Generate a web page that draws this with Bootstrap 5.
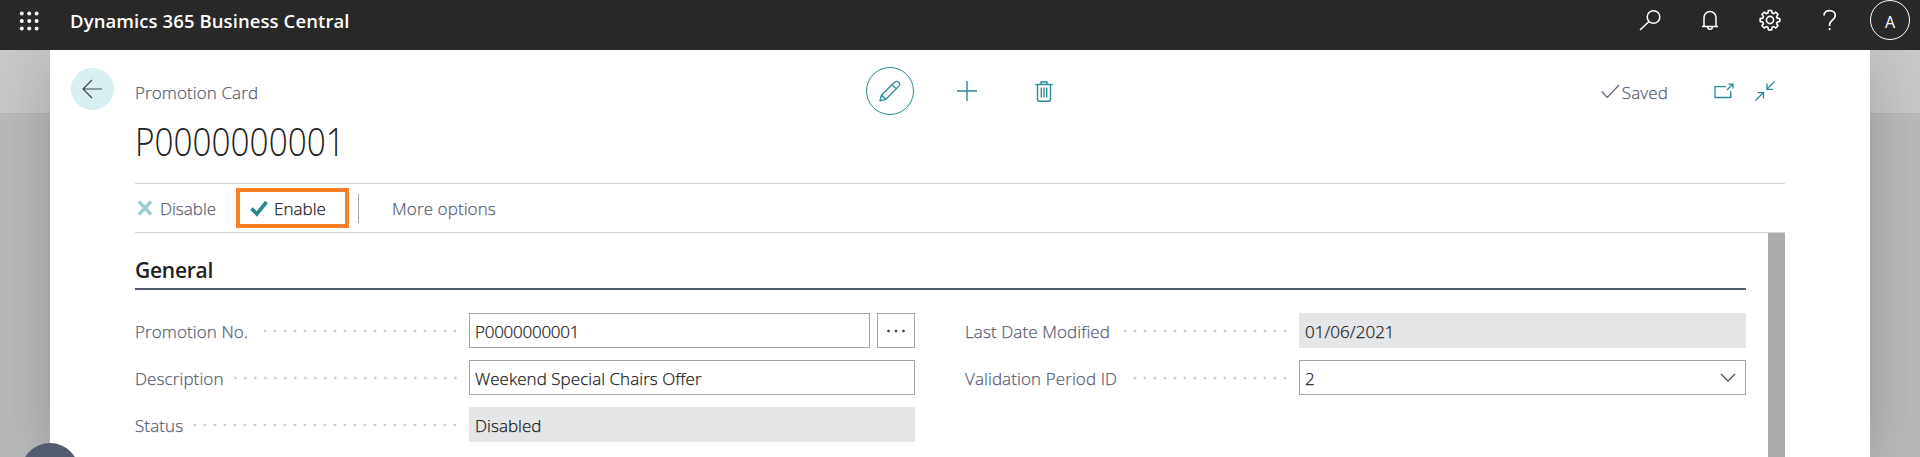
<!DOCTYPE html>
<html lang="en">
<head>
<meta charset="utf-8">
<title>Promotion Card</title>
<meta name="viewport" content="width=device-width, initial-scale=1">
<link href="https://cdn.jsdelivr.net/npm/bootstrap@5.3.0/dist/css/bootstrap.min.css" rel="stylesheet">
<style>
  html { overflow: hidden; }
  body { font-family: "Open Sans", "Noto Sans", sans-serif; font-size: 17px; font-weight: 300; line-height: 24px; height: 457px; overflow: hidden; color: #212121; background: #b9baba; }
  svg { display: block; flex: none; fill: none; }
  .topbar { height: 50px; background: #282828; color: #fff; padding: 0 10px 0 19px; }
  .brand { font-weight: 600; font-size: 18.5px; letter-spacing: .09px; margin-left: 31px; }
  .tools { gap: 38px; padding-bottom: 10px; }
  .avatar { width: 40px; height: 40px; border: 1px solid #fff; border-radius: 50%; font-size: 16px; font-weight: 400; padding-top: 3px; margin-left: -9px; }
  .stage-clip { position: relative; overflow: hidden; height: 407px; }
  .stage { padding: 0 50px; }
  .gutter-top { position: absolute; inset: 0 0 auto 0; height: 64px; background: #c9c9c9; border-bottom: 1px solid #b5b5b5; }
  .sheet { position: relative; height: 407px; background: #fff; box-shadow: 0 10px 60px rgba(0,0,0,.2); padding: 0 85px; -webkit-text-stroke: .25px currentColor; }
  .head { height: 133px; }
  .crumbs { height: 68px; padding-top: 16px; }
  .back { width: 43px; height: 42px; border-radius: 50%; background: #d9eff2; margin: 2px 21px 0 -64px; padding-right: 1px; }
  .crumb-item { margin-top: 15px; }
  .slate { color: #586174; }
  .doc-title { font-size: 38px; line-height: 46px; font-weight: 300; letter-spacing: 0; margin: 0; width: max-content; transform: scaleX(.877); transform-origin: 0 50%; -webkit-text-stroke: 0; }
  .center-tools { position: absolute; left: 816px; top: 17px; height: 48px; }
  .pen { width: 48px; height: 48px; border: 1px solid #2b8a93; border-radius: 50%; }
  .actions { height: 50px; border-top: 1px solid #d2d4d9; border-bottom: 1px solid #d2d4d9; }
  .actions span span, .lab span, .box span, .crumb-item span { position: relative; top: 1px; }
  .hot { width: 113px; height: 40px; border: 4px solid #ff8126; padding-left: 10px; margin-left: 20px; }
  .sep { width: 1px; height: 29px; background: #a3a8b1; margin: 0 33px 0 9px; }
  .body-area { height: 224px; }
  .panel { width: 1611px; }
  .scroller { width: 17px; background: #ababab; }
  .sect { height: 57px; border-bottom: 2px solid #505c6d; font-size: 21px; font-weight: 600; letter-spacing: -.25px; padding-top: 26px; -webkit-text-stroke: 0; }
  .sect span { margin-top: -7px; }
  .cols { display: grid; grid-template-columns: 780px 781px; column-gap: 50px; padding-top: 23px; }
  .field { height: 35px; margin-bottom: 12px; }
  .lab { width: 334px; letter-spacing: .1px; }
  .dots { height: 4px; margin: 0 9px 0 10px; background: radial-gradient(circle at 50% 50%, #c9cbce 1.1px, transparent 1.7px) right center / 10px 4px repeat-x; }
  .box { border: 1px solid #a6a6a6; padding: 0 5px; height: 35px; flex: 1 1 0; min-width: 0; background: #fff; letter-spacing: .04px; }
  .ro { border-color: #e5e6e8; background: #e5e6e8; }
  .assist { width: 38px; flex: none; margin-left: 7px; }
  .bubble { position: absolute; left: 21px; top: 393px; width: 58px; height: 58px; border-radius: 50%; background: #525c6e; }
</style>
</head>
<body>
<header class="topbar d-flex align-items-center">
  <svg width="20" height="20" class="mb-2" viewBox="0 0 20 20"><g fill="#fff"><circle cx="2.8" cy="2.5" r="2"/><circle cx="10.2" cy="2.5" r="2"/><circle cx="17.6" cy="2.500" r="2"/><circle cx="2.8" cy="10" r="2"/><circle cx="10.2" cy="10" r="2"/><circle cx="17.6" cy="10" r="2"/><circle cx="2.8" cy="17.4" r="2"/><circle cx="10.2" cy="17.4" r="2"/><circle cx="17.6" cy="17.4" r="2"/></g></svg>
  <span class="brand mb-2">Dynamics 365 Business Central</span>
  <nav class="tools d-flex align-items-center ms-auto" aria-label="Tools">
    <svg width="22" height="22" viewBox="0 0 22 22" stroke="#fff" stroke-width="1.5"><circle cx="14.5" cy="8" r="6.3"/><path d="M10 12.5 1 21"/></svg>
    <svg width="22" height="22" viewBox="0 0 22 22" stroke="#fff" stroke-width="1.5"><path d="M3 17.4h16M5 17V8.5a6 6 0 0 1 12 0V17M8.7 18a2.3 2.3 0 0 0 4.6 0"/></svg>
    <svg width="22" height="22" viewBox="0 0 22 22" stroke="#fff" stroke-width="1.6"><circle cx="11" cy="11" r="3.6"/><path stroke-linejoin="round" d="M9.4 1.5h3.2l.5 2.5 1.6.7 2.1-1.5 2.2 2.2-1.4 2.2.6 1.5 2.6.5v2.9l-2.6.6-.6 1.6 1.4 2.1-2.2 2.2-2.1-1.4-1.6.6-.5 2.7H9.4l-.5-2.7-1.6-.6-2.1 1.4L3 16.8l1.4-2.1-.6-1.6-2.6-.6V9.6l2.6-.5.6-1.5L3 5.4l2.2-2.2 2.1 1.5L8.9 4z"/></svg>
    <svg width="22" height="22" viewBox="0 0 22 22" stroke="#fff" stroke-width="1.7"><path d="M5 6.5C5 3.4 7.500 1.600 10.600 1.600S16.300 3.500 16.300 6.500c0 4.400-5.700 4.700-5.700 8.900v1.500M10.600 19v2.200"/></svg>
    <span class="avatar d-flex align-items-center justify-content-center">A</span>
  </nav>
</header>
<div class="stage-clip">
  <div class="gutter-top"></div>
  <main class="stage">
    <section class="sheet">
      <div class="head">
        <div class="crumbs d-flex align-items-start">
          <a class="back d-flex align-items-center justify-content-center" href="#" aria-label="Back"><svg width="22" height="20" viewBox="0 0 22 20" stroke="#444" stroke-width="1.2"><path d="M21 10H2M11 1 2 10l9 9"/></svg></a>
          <span class="crumb-item slate" style="letter-spacing:.1px">Promotion Card</span>
          <span class="crumb-item slate d-flex align-items-center ms-auto" style="margin-right:10px">
            <svg width="19" height="15" viewBox="0 0 19 15" stroke="#5a6375" stroke-width="1.2" class="mb-1"><path d="M.7 7.500 6.300 13.300 18 1"/></svg>
            <span style="margin-left:2px;margin-right:46px;letter-spacing:.15px;top:0">Saved</span>
            <svg width="20" height="16" viewBox="0 0 20 16" stroke="#2b8a93" stroke-width="1.3" class="mb-1"><path d="M12 3.600H1v10.900h15.800V8M13 7l6-6M14.500 1.200H19v4.300"/></svg>
            <svg width="20" height="20" viewBox="0 0 20 20" stroke="#2b8a93" stroke-width="1.3" class="mb-1" style="margin-left:21px"><path d="M19.500.6 12 8M12 2.500V8.400h6M.5 19.500 8 12M2.500 11.600h6v6"/></svg>
          </span>
        </div>
        <h1 class="doc-title">P0000000001</h1>
        <div class="center-tools d-flex align-items-center">
          <span class="pen d-flex align-items-center justify-content-center"><svg width="22" height="22" viewBox="0 0 22 22" stroke="#2b8a93" stroke-width="1.3"><path stroke-linejoin="round" d="M1 20.800 2.500 15 15.600 2.300a2.900 2.900 0 0 1 4.100 4.100L6.800 19.300zM2.500 15l4.300 4.300M13.200 4.700l4 4"/></svg></span>
          <svg width="20" height="20" viewBox="0 0 20 20" stroke="#2b8a93" stroke-width="1.4" style="margin-left:43px"><path d="M0 10h20M10 0v20"/></svg>
          <svg width="18" height="21" viewBox="0 0 18 21" stroke="#2b8a93" stroke-width="1.4" style="margin-left:58px"><path d="M.5 3.500h17M6 3V1h6v2M2.500 4v14.800q0 1.400 1.400 1.400h10.200q1.400 0 1.400-1.400V4M6.300 6.500v10M9 6.500v10M11.700 6.500v10"/></svg>
        </div>
      </div>
      <div class="actions d-flex align-items-center">
        <span class="slate d-flex align-items-center"><svg width="18" height="16" viewBox="0 0 18 16" stroke="#a0ccd2" stroke-width="3.600" style="margin-left:1px;margin-right:6px"><path d="M3 1.500l12 13M15 1.500l-12 13"/></svg><span>Disable</span></span>
        <span class="hot d-flex align-items-center"><svg width="18" height="17" viewBox="0 0 18 17" stroke="#2a858e" stroke-width="3.600"><path d="M1.500 8.500 6.800 14 16.500 2"/></svg><span style="margin-left:6px">Enable</span></span>
        <span class="sep"></span>
        <span class="slate"><span style="letter-spacing:.1px">More options</span></span>
      </div>
      <div class="body-area d-flex justify-content-between">
        <div class="panel">
          <div class="sect d-flex align-items-center"><span>General</span></div>
          <div class="cols">
            <div>
              <div class="field d-flex align-items-center"><div class="lab d-flex align-items-center slate"><span>Promotion No.</span><i class="dots flex-grow-1"></i></div><div class="box d-flex align-items-center"><span style="letter-spacing:-.25px">P0000000001</span></div><div class="box assist d-flex align-items-center justify-content-center"><svg width="18" height="4" viewBox="0 0 18 4"><g fill="#333"><circle cx="1.500" cy="2" r="1.300"/><circle cx="9" cy="2" r="1.300"/><circle cx="16.500" cy="2" r="1.300"/></g></svg></div></div>
              <div class="field d-flex align-items-center"><div class="lab d-flex align-items-center slate"><span>Description</span><i class="dots flex-grow-1"></i></div><div class="box d-flex align-items-center"><span>Weekend Special Chairs Offer</span></div></div>
              <div class="field d-flex align-items-center"><div class="lab d-flex align-items-center slate"><span>Status</span><i class="dots flex-grow-1"></i></div><div class="box ro d-flex align-items-center"><span>Disabled</span></div></div>
            </div>
            <div>
              <div class="field d-flex align-items-center"><div class="lab d-flex align-items-center slate"><span>Last Date Modified</span><i class="dots flex-grow-1"></i></div><div class="box ro d-flex align-items-center"><span>01/06/2021</span></div></div>
              <div class="field d-flex align-items-center"><div class="lab d-flex align-items-center slate"><span>Validation Period ID</span><i class="dots flex-grow-1"></i></div><div class="box d-flex align-items-center"><span>2</span><svg class="ms-auto" width="16" height="9" viewBox="0 0 16 9" stroke="#555" stroke-width="1.300" style="margin-right:4px"><path d="M1 1l7 7 7-7"/></svg></div></div>
            </div>
          </div>
        </div>
        <div class="scroller"></div>
      </div>
    </section>
  </main>
  <div class="bubble"></div>
</div>
<script src="https://cdn.jsdelivr.net/npm/bootstrap@5.3.0/dist/js/bootstrap.bundle.min.js"></script>
</body>
</html>
